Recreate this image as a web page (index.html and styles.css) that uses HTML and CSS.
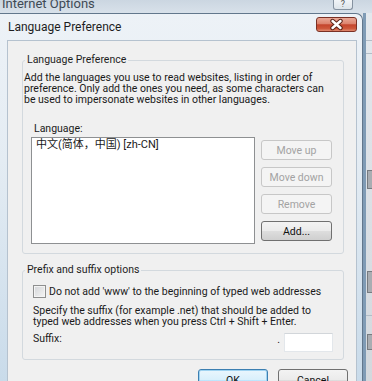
FILE: index.html
```html
<!DOCTYPE html>
<html lang="en">
<head>
    <meta charset="UTF-8">
    <title>Language Preference</title>
    <link rel="stylesheet" href="styles.css">
</head>
<body>
<div class="bg-title">
    <span class="bg-name">Internet Options</span>
    <span class="bg-help">?</span>
</div>
<div class="row">
    <div class="dialog">
        <div class="caption">
            <span class="caption-text">Language Preference</span>
            <span class="close">
                <svg width="39" height="13" viewBox="0 0 39 13">
                    <path d="M15.5 3 L23.5 10 M23.5 3 L15.5 10" stroke="#5a2418" stroke-width="4.4" stroke-linecap="round"/>
                    <path d="M15.5 3 L23.5 10 M23.5 3 L15.5 10" stroke="#fff" stroke-width="2.4" stroke-linecap="round"/>
                </svg>
            </span>
        </div>
        <div class="client">
            <fieldset class="group lang">
                <legend>Language Preference</legend>
                <p class="desc">Add the languages you use to read websites, listing in order of<br>preference. Only add the ones you need, as some characters can<br>be used to impersonate websites in other languages.</p>
                <div class="lang-label">Language:</div>
                <div class="lang-row">
                    <div class="listbox">
                        <div class="item">中文(简体，中国) [zh-CN]</div>
                    </div>
                    <div class="btns">
                        <button class="btn off">Move up</button>
                        <button class="btn off">Move down</button>
                        <button class="btn off">Remove</button>
                        <button class="btn">Add...</button>
                    </div>
                </div>
            </fieldset>
            <fieldset class="group prefix">
                <legend>Prefix and suffix options</legend>
                <div class="check"><span class="box"></span><span>Do not add 'www' to the beginning of typed web addresses</span></div>
                <p class="desc spec">Specify the suffix (for example .net) that should be added to<br>typed web addresses when you press Ctrl + Shift + Enter.</p>
                <div class="suffix-row">
                    <span>Suffix:</span>
                    <span class="dot">.</span>
                    <span class="suffix-input"></span>
                </div>
            </fieldset>
            <div class="actions">
                <button class="btn wide default">OK</button>
                <button class="btn wide">Cancel</button>
            </div>
        </div>
    </div>
    <div class="bg-side">
        <div class="side-line l1"></div>
        <div class="side-line l2"></div>
        <div class="side-btn b1"></div>
        <div class="side-btn b2"></div>
        <div class="side-line l3"></div>
        <div class="side-btn b3"></div>
    </div>
</div>
</body>
</html>
```

FILE: styles.css
```css
*{margin:0;padding:0;box-sizing:border-box;}
body{width:372px;height:381px;overflow:hidden;background:#d9dfe5;font-family:Roboto,"Noto Sans CJK SC",sans-serif;font-size:10.5px;color:#1a1a1a;}

.bg-title{height:13px;display:flex;align-items:flex-start;background:linear-gradient(#cbd6e1,#d8e1ea);}
.bg-name{font-size:13px;line-height:7px;padding-left:2px;color:#3f4a55;}
.bg-help{margin-left:auto;margin-right:19px;width:20px;height:10px;border:1px solid #8592a0;border-top:none;border-radius:0 0 3px 3px;background:linear-gradient(#f1f4f7,#dde4ea);font-size:9px;line-height:8px;text-align:center;color:#555;}

.row{display:flex;height:368px;}
.dialog{margin-left:-8px;width:371px;flex:none;border:1px solid #62778c;border-bottom:none;border-radius:0 7px 0 0;background:linear-gradient(#edf2f7,#e4ecf3 40%,#c9dbea);display:flex;flex-direction:column;}
.caption{height:26px;flex:none;display:flex;align-items:flex-start;padding-left:15px;}
.caption-text{font-size:12px;line-height:25px;padding-top:1px;color:#1e1e1e;}
.close{margin-left:auto;margin-right:5px;margin-top:3px;width:41px;height:15px;border:1px solid #7a3125;border-radius:3px;background:linear-gradient(#eaa896 0%,#dc836d 45%,#c4452c 52%,#cd5639 80%,#e08a70 100%);}
.close svg{display:block;}

.client{flex:1;margin:0 5px 0 14px;background:#f0f0f0;border:1px solid #b5c2cf;border-bottom:none;}

.group{margin:13px 12px 0 14px;border:1px solid #d3d9de;border-radius:3px;padding:6px 0 9px 1px;}
.group legend{margin-left:1px;padding:0 2px;line-height:12px;color:#1e1e1e;}
.desc{white-space:nowrap;line-height:11px;}

.lang-label{margin:18px 0 0 10px;line-height:11px;}
.lang-row{display:flex;margin:3px 0 0 7px;}
.listbox{width:224px;height:107px;border:1px solid #8e9092;background:#fff;padding:0 4px;}
.item{font-size:11px;line-height:12px;padding-top:1px;}
.btns{display:flex;flex-direction:column;gap:7px;margin:3px 0 0 6px;}

.btn{width:71px;height:20px;border:1px solid #707070;border-radius:3px;background:linear-gradient(#f3f3f3 0%,#ebebeb 48%,#dddddd 52%,#cfcfcf 100%);font-family:inherit;font-size:10.5px;color:#111;}
.btn.off{border-color:#c7c7c7;background:#f4f4f4;color:#a3a3a3;}

.prefix{margin-top:10px;padding:9px 0 7px 1px;}
.check{display:flex;align-items:center;height:13px;margin-left:9px;line-height:13px;}
.box{width:13px;height:13px;border:1px solid #8e8f8f;background:linear-gradient(135deg,#d3d5d8,#f5f5f5);box-shadow:inset 0 0 0 1px #f4f4f4;margin-right:3px;}
.spec{margin:7px 0 0 9px;}
.suffix-row{display:flex;align-items:flex-start;margin:6px 0 0 9px;line-height:11px;}
.dot{margin-left:auto;line-height:13px;}
.suffix-input{width:49px;height:19px;margin:0 10px 0 4px;border:1px solid #e3e7eb;border-top-color:#d2d6da;background:#fff;}

.actions{display:flex;justify-content:flex-end;gap:10px;margin:9px 8px 0 0;}
.btn.wide{width:70px;height:22px;}
.btn.default{border-color:#3c7fb1;background:linear-gradient(#eaf6fd 0%,#d9f0fc 48%,#bee6fd 52%,#a7d9f5 100%);box-shadow:inset 0 0 0 1px #9fd3f1;}

.bg-side{flex:1;display:flex;flex-direction:column;background:linear-gradient(#e3e8ed,#d3d8dd);box-shadow:inset 3px 0 #7f9bb5;}
.side-line{height:1px;background:#b3bdc7;margin-left:3px;}
.l1{margin-top:27px;}
.l2{margin-top:12px;}
.side-btn{height:19px;margin-left:4px;border:1px solid #777b80;border-right:none;background:#a9adb2;}
.b1{margin-top:116px;}
.b2{margin-top:82px;height:22px;}
.l3{margin-top:22px;}
.b3{margin-top:18px;height:16px;}
```
